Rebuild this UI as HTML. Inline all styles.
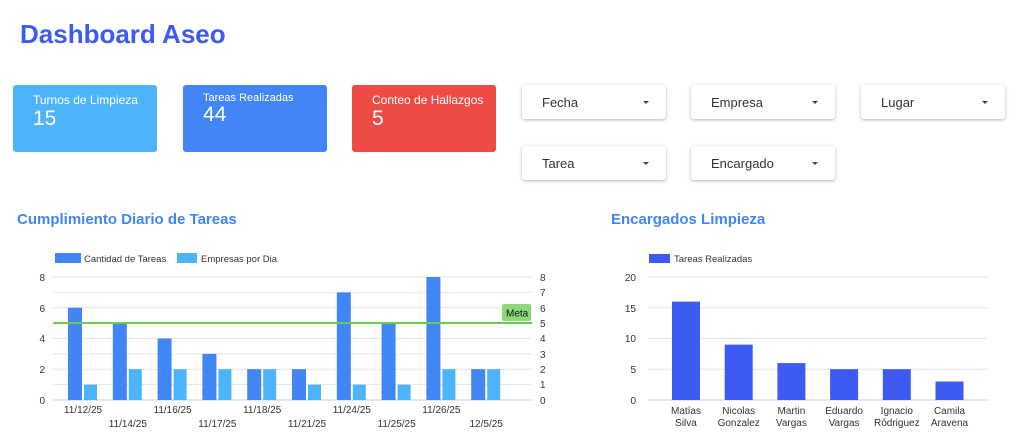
<!DOCTYPE html>
<html><head><meta charset="utf-8"><style>
body{margin:0;width:1024px;height:448px;background:#fff;font-family:"Liberation Sans",sans-serif;position:relative;overflow:hidden}
.a{position:absolute}
.card{position:absolute;top:85px;width:144px;height:67px;border-radius:3px;color:#fff}
.card .t{position:absolute;left:20px;top:8px;font-size:12px}
.card .v{position:absolute;left:20px;top:22px;font-size:21px}
.dd{position:absolute;width:144px;height:34px;background:#fff;border-radius:3px;box-shadow:0 1px 3px rgba(0,0,0,.3);font-size:13px;color:#333}
.dd span{position:absolute;left:20px;top:10px}
.dd i{position:absolute;right:17px;top:16px;border-left:3px solid transparent;border-right:3px solid transparent;border-top:3px solid #444}
</style></head><body>
<div class="a" style="left:20px;top:19px;font-size:26px;font-weight:bold;color:#3d5af1">Dashboard Aseo</div>
<div class="card" style="left:13px;background:#4db4fc"><div class="t">Turnos de Limpieza</div><div class="v">15</div></div>
<div class="card" style="left:183px;background:#4285f4"><div class="t" style="font-size:11px;top:7px">Tareas Realizadas</div><div class="v" style="top:18px">44</div></div>
<div class="card" style="left:352px;background:#ed4b45"><div class="t">Conteo de Hallazgos</div><div class="v">5</div></div>
<div class="dd" style="left:522px;top:85px"><span>Fecha</span><i></i></div>
<div class="dd" style="left:691px;top:85px"><span>Empresa</span><i></i></div>
<div class="dd" style="left:861px;top:85px"><span>Lugar</span><i></i></div>
<div class="dd" style="left:522px;top:146px"><span>Tarea</span><i></i></div>
<div class="dd" style="left:691px;top:146px"><span>Encargado</span><i></i></div>
<div class="a" style="left:17px;top:211px;font-size:15px;font-weight:bold;color:#4285f4">Cumplimiento Diario de Tareas</div>
<div class="a" style="left:611px;top:211px;font-size:15px;font-weight:bold;color:#4285f4">Encargados Limpieza</div>
<svg class="a" style="left:0;top:0" width="1024" height="448" font-family="Liberation Sans, sans-serif" font-size="10" fill="#333">
<rect x="55" y="253" width="26" height="10" fill="#4285f4"/><text x="84" y="262" font-size="9.5">Cantidad de Tareas</text>
<rect x="177" y="253" width="20" height="10" fill="#4db4fc"/><text x="201" y="262" font-size="9.5">Empresas por Dia</text>
<g stroke="#e4e4e4" stroke-width="1">
<line x1="53" x2="532" y1="277" y2="277"/><line x1="53" x2="532" y1="292.4" y2="292.4"/><line x1="53" x2="532" y1="307.7" y2="307.7"/><line x1="53" x2="532" y1="323.1" y2="323.1"/><line x1="53" x2="532" y1="338.5" y2="338.5"/><line x1="53" x2="532" y1="353.9" y2="353.9"/><line x1="53" x2="532" y1="369.2" y2="369.2"/><line x1="53" x2="532" y1="384.6" y2="384.6"/>
</g>
<line x1="53" x2="532" y1="400" y2="400" stroke="#ccc"/>
<g text-anchor="end"><text x="45" y="281">8</text><text x="45" y="312">6</text><text x="45" y="342">4</text><text x="45" y="373">2</text><text x="45" y="404">0</text></g>
<g><text x="540" y="281">8</text><text x="540" y="296">7</text><text x="540" y="312">6</text><text x="540" y="327">5</text><text x="540" y="342">4</text><text x="540" y="358">3</text><text x="540" y="373">2</text><text x="540" y="388">1</text><text x="540" y="404">0</text></g>
<g fill="#4285f4">
<rect x="68" y="307.7" width="14" height="92.3"/><rect x="112.8" y="323.1" width="14" height="76.9"/><rect x="157.6" y="338.5" width="14" height="61.5"/><rect x="202.4" y="353.9" width="14" height="46.1"/><rect x="247.2" y="369.2" width="14" height="30.8"/><rect x="292" y="369.2" width="14" height="30.8"/><rect x="336.8" y="292.4" width="14" height="107.6"/><rect x="381.6" y="323.1" width="14" height="76.9"/><rect x="426.4" y="277" width="14" height="123"/><rect x="471.2" y="369.2" width="14" height="30.8"/>
</g>
<g fill="#4db4fc">
<rect x="84" y="384.6" width="13" height="15.4"/><rect x="128.8" y="369.2" width="13" height="30.8"/><rect x="173.6" y="369.2" width="13" height="30.8"/><rect x="218.4" y="369.2" width="13" height="30.8"/><rect x="263.2" y="369.2" width="13" height="30.8"/><rect x="308" y="384.6" width="13" height="15.4"/><rect x="352.8" y="384.6" width="13" height="15.4"/><rect x="397.6" y="384.6" width="13" height="15.4"/><rect x="442.4" y="369.2" width="13" height="30.8"/><rect x="487.2" y="369.2" width="13" height="30.8"/>
</g>
<line x1="53" x2="532" y1="323" y2="323" stroke="#6ccc4f" stroke-width="2"/>
<rect x="502" y="304" width="29" height="17" rx="2" fill="#8ed87a"/><text x="506" y="316.5" fill="#111">Meta</text>
<g text-anchor="middle">
<text x="83" y="413">11/12/25</text><text x="127.8" y="427">11/14/25</text><text x="172.6" y="413">11/16/25</text><text x="217.4" y="427">11/17/25</text><text x="262.2" y="413">11/18/25</text><text x="307" y="427">11/21/25</text><text x="351.8" y="413">11/24/25</text><text x="396.6" y="427">11/25/25</text><text x="441.4" y="413">11/26/25</text><text x="486.2" y="427">12/5/25</text>
</g>
<rect x="649" y="254" width="21" height="9" fill="#3d5af1"/><text x="674" y="262" font-size="9.5">Tareas Realizadas</text>
<g stroke="#e4e4e4"><line x1="648" x2="988" y1="277" y2="277"/><line x1="648" x2="988" y1="307.7" y2="307.7"/><line x1="648" x2="988" y1="338.5" y2="338.5"/><line x1="648" x2="988" y1="369.2" y2="369.2"/></g>
<line x1="648" x2="988" y1="400" y2="400" stroke="#ccc"/>
<g text-anchor="end"><text x="636" y="281">20</text><text x="636" y="312">15</text><text x="636" y="342">10</text><text x="636" y="373">5</text><text x="636" y="404">0</text></g>
<g fill="#3d5af1">
<rect x="672" y="301.6" width="28" height="98.4"/><rect x="724.7" y="344.6" width="28" height="55.4"/><rect x="777.4" y="363.1" width="28" height="36.9"/><rect x="830.1" y="369.2" width="28" height="30.8"/><rect x="882.8" y="369.2" width="28" height="30.8"/><rect x="935.5" y="381.5" width="28" height="18.5"/>
</g>
<g text-anchor="middle">
<text x="686" y="414">Matías</text><text x="686" y="426">Silva</text>
<text x="738.7" y="414">Nicolas</text><text x="738.7" y="426">Gonzalez</text>
<text x="791.4" y="414">Martin</text><text x="791.4" y="426">Vargas</text>
<text x="844.1" y="414">Eduardo</text><text x="844.1" y="426">Vargas</text>
<text x="896.8" y="414">Ignacio</text><text x="896.8" y="426">Ródriguez</text>
<text x="949.5" y="414">Camila</text><text x="949.5" y="426">Aravena</text>
</g>
</svg>
</body></html>
